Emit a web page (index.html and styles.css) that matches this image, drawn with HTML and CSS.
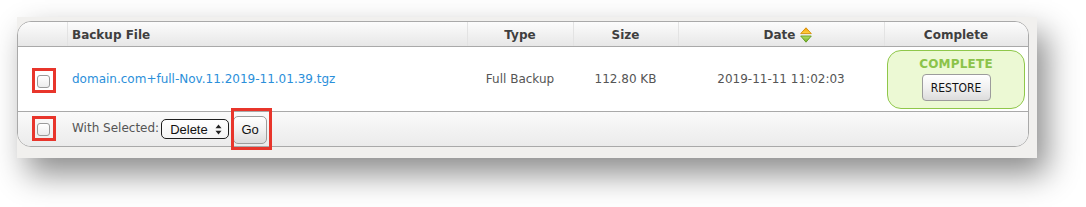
FILE: index.html
```html
<!DOCTYPE html>
<html>
<head>
<meta charset="utf-8">
<link rel="stylesheet" href="styles.css">
</head>
<body>
<div class="page">
<div class="frame">
  <div class="tbl">
    <div class="row head">
      <div class="c c-chk"></div>
      <div class="c c-file sep">Backup File</div>
      <div class="c c-mid sep">Type</div>
      <div class="c c-mid sep">Size</div>
      <div class="c c-mid c-date sep">Date
        <svg class="sort" width="12" height="16" viewBox="0 0 12 16">
          <defs>
            <linearGradient id="up" x1="0" y1="0" x2="0" y2="1">
              <stop offset="0" stop-color="#f39a00"/>
              <stop offset="1" stop-color="#ffd84a"/>
            </linearGradient>
            <linearGradient id="dn" x1="0" y1="0" x2="0" y2="1">
              <stop offset="0" stop-color="#b6e06a"/>
              <stop offset="1" stop-color="#6fae22"/>
            </linearGradient>
          </defs>
          <polygon points="6,0.8 11.3,6.6 0.7,6.6" fill="url(#up)" stroke="#d48a00" stroke-width="0.9" stroke-linejoin="round"/>
          <polygon points="0.7,9 11.3,9 6,15.2" fill="url(#dn)" stroke="#5f9a1c" stroke-width="0.9" stroke-linejoin="round"/>
        </svg>
      </div>
      <div class="c c-mid sep">Complete</div>
    </div>
    <div class="row body">
      <div class="c c-chk"><span class="cb hl"></span></div>
      <div class="c c-file"><a class="link" href="#">domain.com+full-Nov.11.2019-11.01.39.tgz</a></div>
      <div class="c c-mid">Full Backup</div>
      <div class="c c-mid">112.80 KB</div>
      <div class="c c-mid">2019-11-11 11:02:03</div>
      <div class="c c-comp">
        <div class="status">
          <div class="status-label">COMPLETE</div>
          <span class="btn restore">RESTORE</span>
        </div>
      </div>
    </div>
    <div class="foot">
      <div class="c-chk"><span class="cb hl"></span></div>
      <div class="actions">
        <span class="lbl">With Selected:</span>
        <span class="select">Delete
          <svg width="7" height="11" viewBox="0 0 7 11"><polygon points="3.5,0.5 6.5,4.3 0.5,4.3" fill="#222"/><polygon points="0.5,6.7 6.5,6.7 3.5,10.5" fill="#222"/></svg>
        </span>
        <span class="btn go hl hl-go">Go</span>
      </div>
    </div>
  </div>
</div>
</div>
</body>
</html>
```
FILE: styles.css
```css
html, body {
  margin: 0;
  padding: 0;
  background: #ffffff;
}
body {
  font-family: "DejaVu Sans", sans-serif;
  font-size: 12px;
  color: #555;
}
.page {
  height: 207px;
  padding: 17px 0 0 17px;
  box-sizing: border-box;
}
.frame {
  width: 1020px;
  height: 141px;
  box-sizing: border-box;
  padding-top: 4px;
  background: #f1f0ee;
  box-shadow: 10px 16px 30px rgba(0, 0, 0, 0.45);
}
.tbl {
  width: 1012px;
  box-sizing: border-box;
  border: 1px solid #a9a9a9;
  border-radius: 14px;
  background: #fff;
}
.row {
  display: grid;
  grid-template-columns: 49px 400px 106px 105px 206px 1fr;
}
.c {
  display: flex;
  align-items: center;
}
.head {
  height: 24px;
  border-bottom: 1px solid #a9a9a9;
  border-radius: 13px 13px 0 0;
  background: linear-gradient(#fcfcfc, #e7e7e7);
  font-weight: bold;
  color: #3f3f3f;
}
.head .c {
  padding-top: 1px;
}
.sep {
  box-shadow: inset 1px 0 0 #e3e3e3;
}
.c-file {
  padding-left: 5px;
}
.c-mid {
  justify-content: center;
}
.c-date {
  padding-left: 14px;
  gap: 5px;
}
.sort {
  display: block;
}
.body {
  height: 64px;
  border-bottom: 1px solid #a9a9a9;
  background: #fff;
}
.c-chk {
  padding-left: 19px;
}
.cb {
  display: block;
  width: 11px;
  height: 11px;
  border: 1px solid #9a9a9a;
  border-radius: 3px;
  background: linear-gradient(#ffffff, #ececec);
}
.hl {
  position: relative;
}
.hl::after {
  content: "";
  position: absolute;
  top: -8px;
  left: -6px;
  right: -7px;
  bottom: -6px;
  border: 3px solid #e8352b;
}
.body .cb {
  margin-top: 4px;
}
.link {
  color: #2b8fda;
  text-decoration: none;
}
.c-comp {
  justify-content: center;
  padding: 3px 3px 2px 3px;
}
.status {
  flex: 1;
  align-self: stretch;
  border: 1px solid #8fc74a;
  border-radius: 14px;
  background: #ecf9d4;
  display: flex;
  flex-direction: column;
  align-items: center;
  padding-top: 6px;
  gap: 3px;
}
.status-label {
  font-weight: bold;
  color: #8bc34a;
  letter-spacing: 0.2px;
}
.btn {
  display: flex;
  align-items: center;
  justify-content: center;
  box-sizing: border-box;
  border: 1px solid #9c9c9c;
  background: linear-gradient(#ffffff, #f1f1f1 50%, #dcdcdc);
  color: #111;
}
.restore {
  width: 69px;
  height: 27px;
  border-radius: 4px;
  font-family: "DejaVu Sans Condensed", "DejaVu Sans", sans-serif;
  font-stretch: condensed;
  font-size: 12px;
}
.foot {
  height: 34px;
  display: flex;
  align-items: center;
  border-radius: 0 0 13px 13px;
  background: linear-gradient(#fafafa, #ebebeb);
}
.foot .c-chk {
  width: 49px;
  box-sizing: border-box;
}
.actions {
  display: flex;
  align-items: center;
  padding-left: 5px;
}
.lbl {
  color: #555;
  margin-right: 2px;
  margin-top: -2px;
}
.select {
  display: flex;
  align-items: center;
  justify-content: space-between;
  box-sizing: border-box;
  width: 68px;
  height: 20px;
  padding: 0 6px 0 8px;
  border: 1px solid #1e1e1e;
  border-radius: 5px;
  background: linear-gradient(#ffffff, #f4f4f4);
  font-family: "Liberation Sans", Arial, sans-serif;
  font-size: 13px;
  color: #111;
}
.go {
  width: 34px;
  height: 28px;
  margin-left: 4px;
  margin-top: 1px;
  border-radius: 5px;
  font-family: "Liberation Sans", Arial, sans-serif;
  font-size: 13px;
}
.hl-go::after {
  top: -9px;
  left: -3px;
  right: -6px;
  bottom: -7px;
}
```
